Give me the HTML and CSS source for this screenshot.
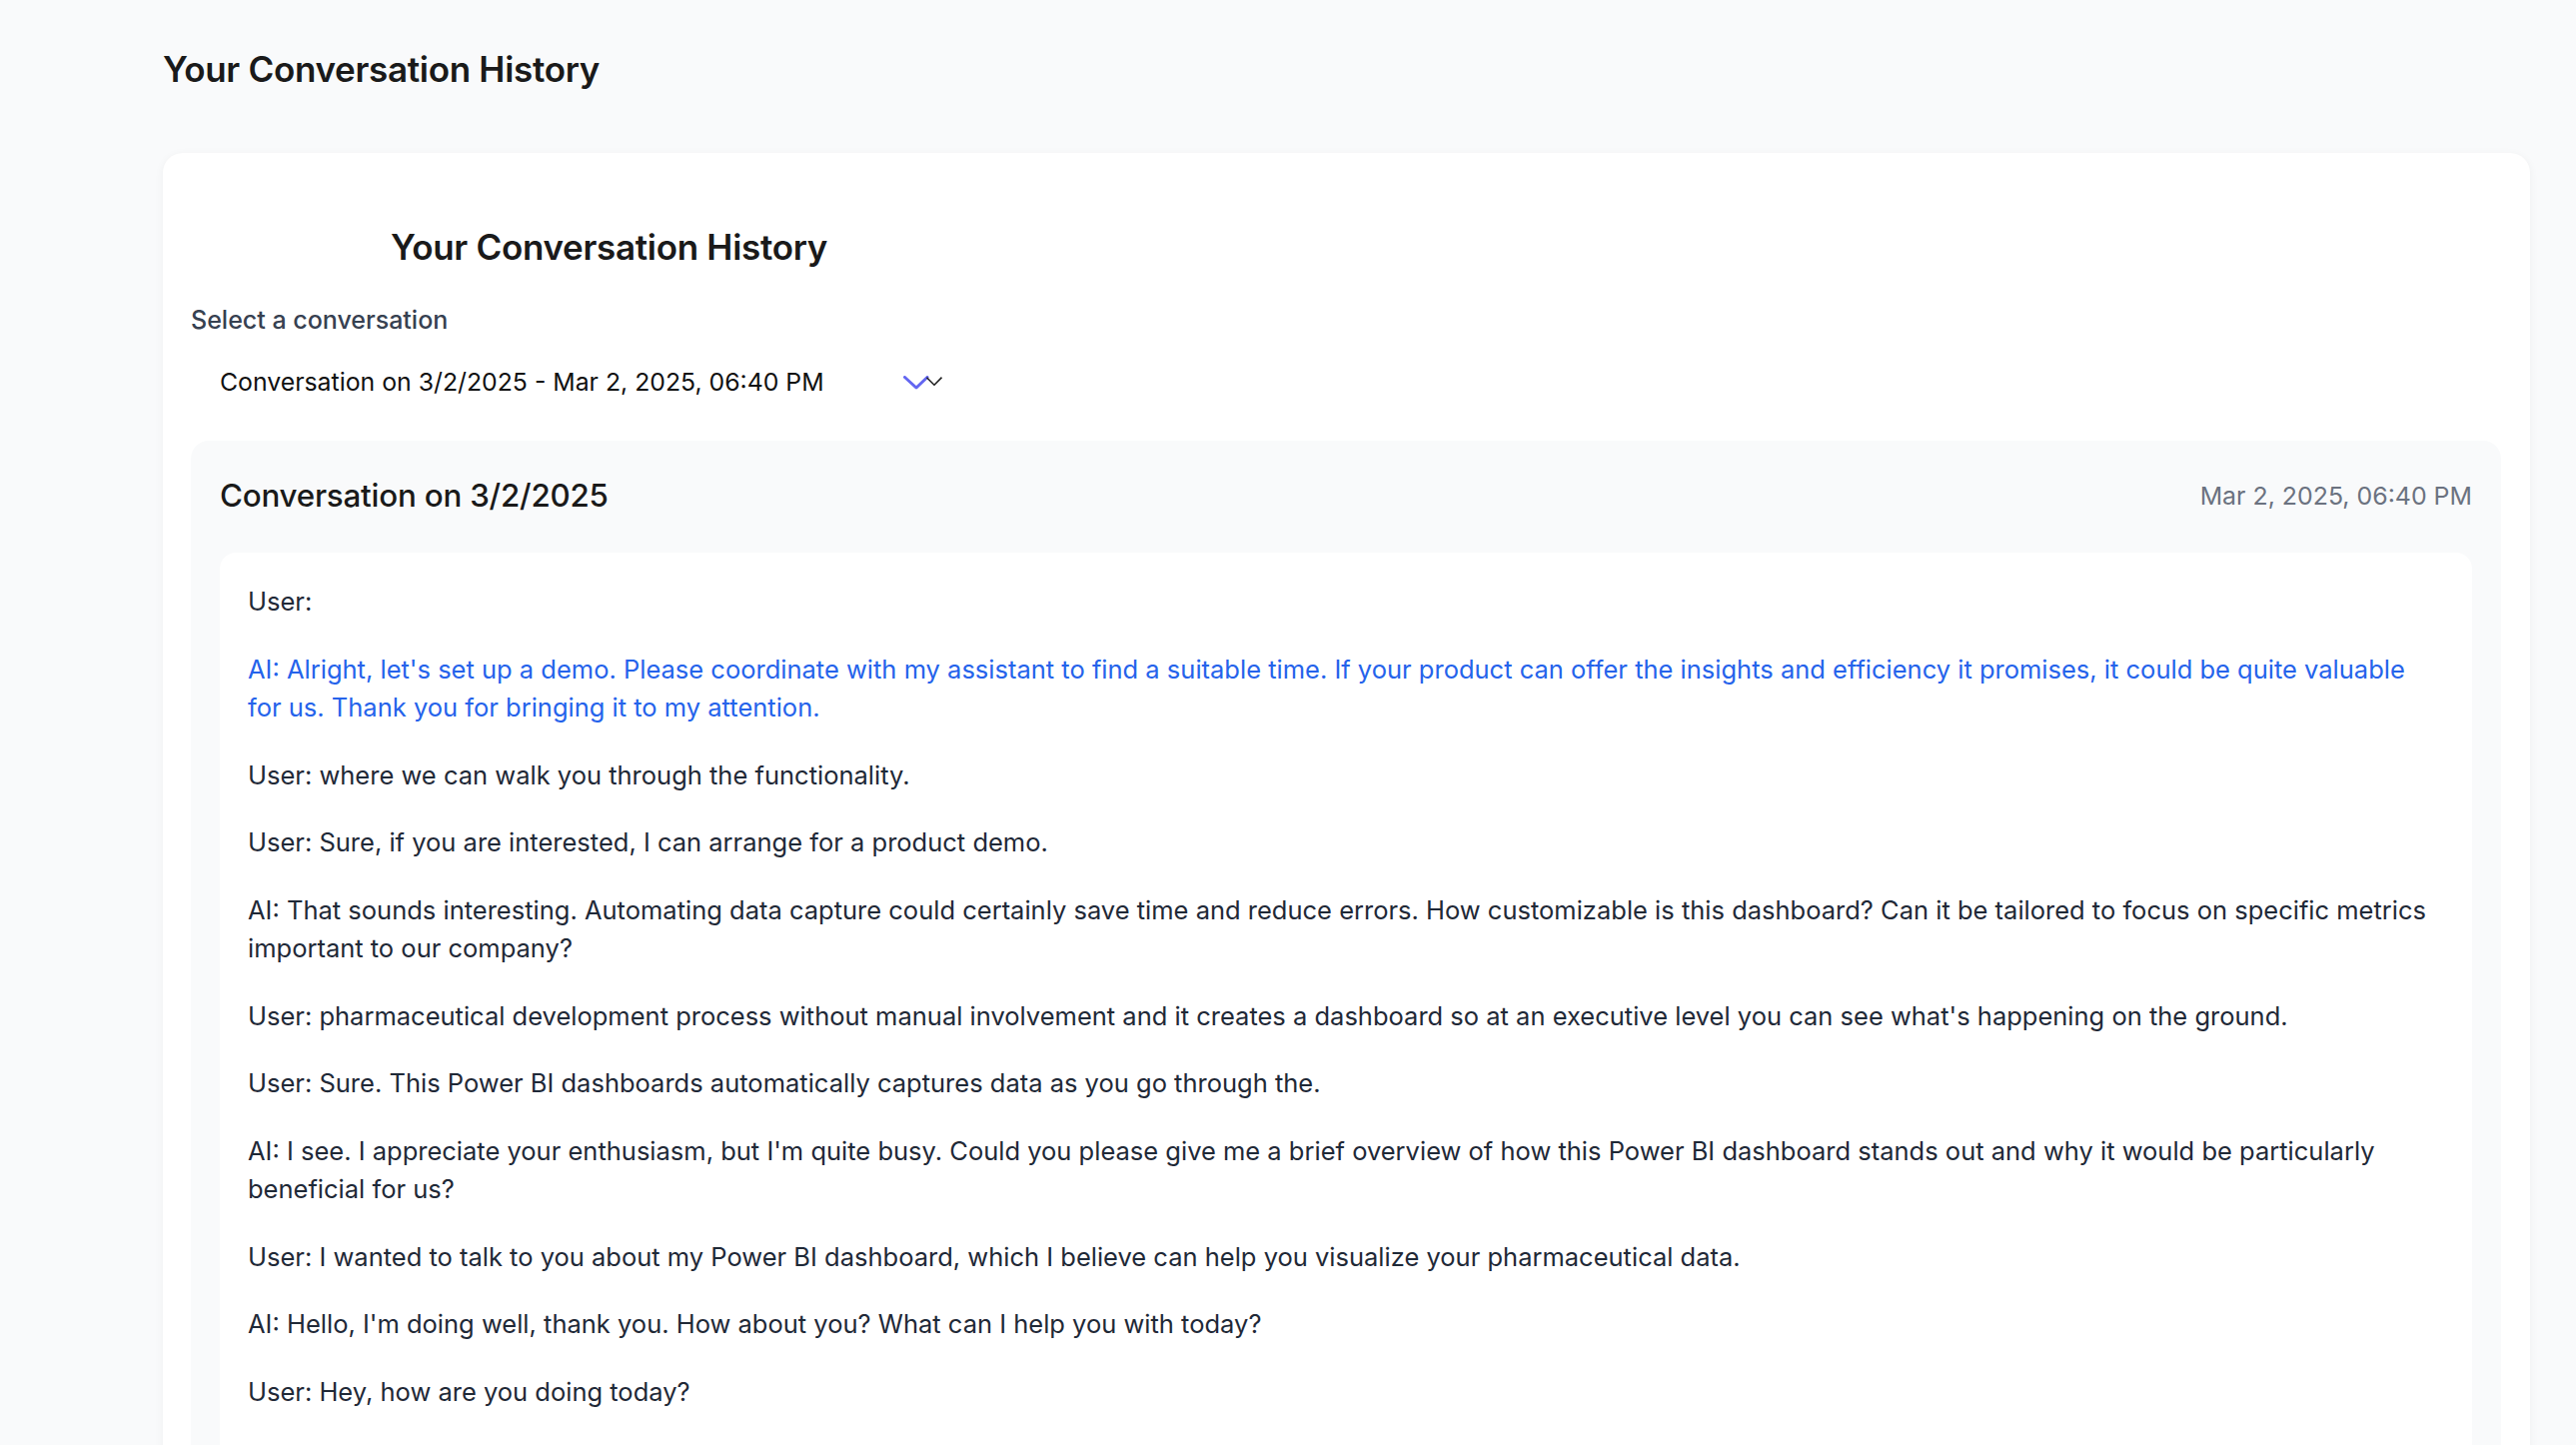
FILE: index.html
```html
<!DOCTYPE html>
<html lang="en">
<head>
<meta charset="utf-8">
<title>Your Conversation History</title>
<link rel="stylesheet" href="styles.css">
</head>
<body>
<main class="page">
  <h1 class="page-title">Your Conversation History</h1>
  <section class="card">
    <h2 class="card-title">Your Conversation History</h2>
    <label class="select-label">Select a conversation</label>
    <div class="select">
      <span class="select-value">Conversation on 3/2/2025 - Mar 2, 2025, 06:40 PM</span>
      <svg class="chevrons" width="40" height="14" viewBox="0 0 40 14">
        <path d="M1.5 1.5 L13 12 L24 1.5" fill="none" stroke="#6366f1" stroke-width="3" stroke-linecap="round" stroke-linejoin="round"/>
        <path d="M23.5 1.8 L31 9.2 L38.5 1.6" fill="none" stroke="#222" stroke-width="1.6"/>
      </svg>
    </div>
    <div class="convo">
      <div class="convo-head">
        <h3 class="convo-title">Conversation on 3/2/2025</h3>
        <span class="convo-date">Mar 2, 2025, 06:40 PM</span>
      </div>
      <div class="messages">
        <p class="msg">User:</p>
        <p class="msg msg-active">AI: Alright, let's set up a demo. Please coordinate with my assistant to find a suitable time. If your product can offer the insights and efficiency it promises, it could be quite valuable for us. Thank you for bringing it to my attention.</p>
        <p class="msg">User: where we can walk you through the functionality.</p>
        <p class="msg">User: Sure, if you are interested, I can arrange for a product demo.</p>
        <p class="msg">AI: That sounds interesting. Automating data capture could certainly save time and reduce errors. How customizable is this dashboard? Can it be tailored to focus on specific metrics important to our company?</p>
        <p class="msg">User: pharmaceutical development process without manual involvement and it creates a dashboard so at an executive level you can see what's happening on the ground.</p>
        <p class="msg">User: Sure. This Power BI dashboards automatically captures data as you go through the.</p>
        <p class="msg">AI: I see. I appreciate your enthusiasm, but I'm quite busy. Could you please give me a brief overview of how this Power BI dashboard stands out and why it would be particularly beneficial for us?</p>
        <p class="msg">User: I wanted to talk to you about my Power BI dashboard, which I believe can help you visualize your pharmaceutical data.</p>
        <p class="msg">AI: Hello, I'm doing well, thank you. How about you? What can I help you with today?</p>
        <p class="msg">User: Hey, how are you doing today?</p>
      </div>
    </div>
  </section>
</main>
</body>
</html>
```

FILE: styles.css
```css
* { box-sizing: border-box; }
html, body { margin: 0; padding: 0; }
body {
  background: #f9fafb;
  font-family: Inter, "Noto Sans", "Liberation Sans", sans-serif;
  color: #1f2937;
}
.page {
  padding: 45px 46px 0 163px;
}
.page-title {
  margin: 0 0 60px;
  font-size: 35px;
  line-height: 48px;
  font-weight: 600;
  color: #1a1a1a;
  letter-spacing: -0.3px;
}
.card {
  background: #fff;
  border-radius: 20px;
  box-shadow: 0 2px 10px rgba(0, 0, 0, 0.05);
  padding: 70px 29px 40px 28px;
}
.card-title {
  margin: 0 0 34px 200px;
  font-size: 35px;
  line-height: 48px;
  font-weight: 600;
  color: #1a1a1a;
  letter-spacing: -0.3px;
}
.select-label {
  display: block;
  font-size: 25px;
  line-height: 30px;
  font-weight: 500;
  color: #374151;
  margin-bottom: 16px;
}
.select {
  width: 770px;
  height: 62px;
  display: flex;
  align-items: center;
  justify-content: space-between;
  padding: 0 17px 0 29px;
  margin-bottom: 28px;
}
.select-value {
  font-size: 24.8px;
  color: #111;
}
.chevrons { display: block; margin-top: 2px; }
.convo {
  background: #f9fafb;
  border-radius: 18px;
  padding: 29px 29px 0 29px;
}
.convo-head {
  display: flex;
  justify-content: space-between;
  align-items: center;
  margin-bottom: 31px;
  height: 52px;
}
.convo-title {
  margin: 0;
  font-size: 31.3px;
  font-weight: 500;
  color: #1a1a1a;
  letter-spacing: -0.2px;
}
.convo-date {
  font-size: 24.9px;
  color: #6b7280;
}
.messages {
  background: #fff;
  border-radius: 16px;
  padding: 30px 29px 60px 28px;
}
.msg {
  margin: 0 0 29px;
  font-size: 25.5px;
  line-height: 38.5px;
  color: #1f2937;
}
.msg-active { color: #2563eb; }
```
